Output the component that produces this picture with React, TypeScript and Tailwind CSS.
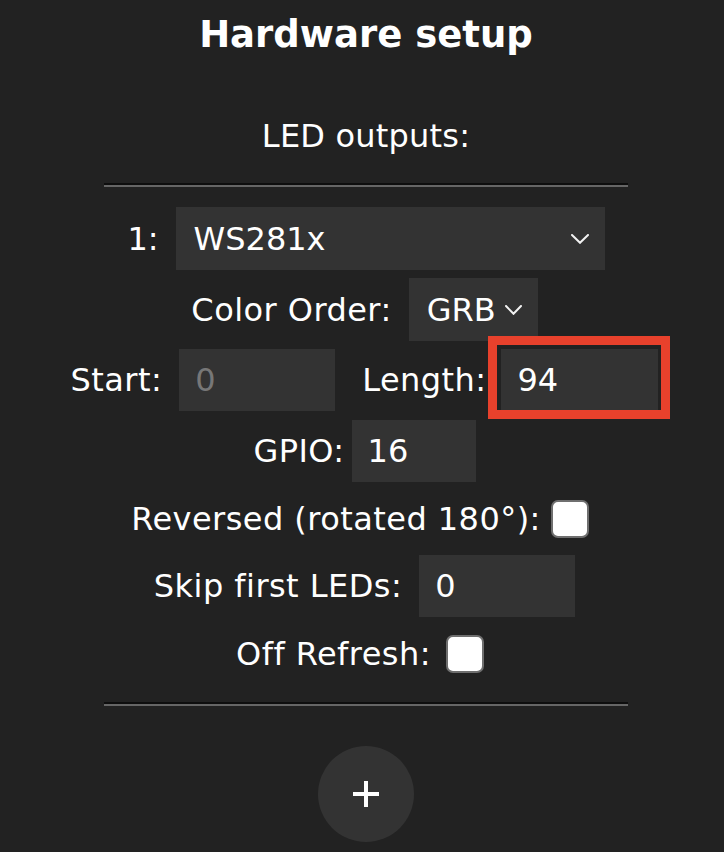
import React from "react";

const Chevron = ({ w, h }: { w: number; h: number }) => (
  <svg width={w} height={h} viewBox={`0 0 ${w} ${h}`} fill="none">
    <polyline
      points={`1,1 ${w / 2},${h - 1.2} ${w - 1},1`}
      stroke="#f2f2f2"
      strokeWidth="2"
      strokeLinecap="round"
      strokeLinejoin="miter"
    />
  </svg>
);

const Box = ({
  w,
  value,
  muted,
  className = "",
}: {
  w: string;
  value: string;
  muted?: boolean;
  className?: string;
}) => (
  <div
    className={`flex h-[62px] items-center bg-[#333333] pl-[16px] ${w} ${
      muted ? "text-[#777777]" : "text-white"
    } ${className}`}
  >
    {value}
  </div>
);

const Check = () => (
  <div className="mr-[12px] h-[38px] w-[38px] rounded-[7px] border-[2px] border-[#6f6f6f] bg-white" />
);

const Label = ({ children, className = "" }: { children: React.ReactNode; className?: string }) => (
  <span className={`tracking-[0.45px] ${className}`}>{children}</span>
);

export default function App() {
  return (
    <div
      className="min-h-screen bg-[#222222] pl-2 text-white"
      style={{ fontFamily: '"DejaVu Sans", Verdana, sans-serif' }}
    >
      <div className="flex flex-col items-center text-[32px] leading-none">
        <h2 className="flex h-[68px] items-center text-[37px] font-bold">Hardware setup</h2>

        <div className="mt-[44px] flex h-[48px] items-center tracking-[0.2px]">LED outputs:</div>

        <div className="mt-[23px] w-[524px] border-t-2 border-b-2 border-t-[#0e0e0e] border-b-[#666666]" />

        {/* Row 1 */}
        <div className="mt-[20px] flex h-[63px] items-center gap-[17px]">
          <span>1:</span>
          <div className="flex h-[63px] w-[429px] items-center justify-between bg-[#333333] pl-[18px] pr-[16px]">
            <span>WS281x</span>
            <Chevron w={18} h={10} />
          </div>
        </div>

        {/* Row 2 */}
        <div className="mt-[8px] flex h-[63px] items-center gap-[17px] pr-[3px]">
          <Label>Color Order:</Label>
          <div className="flex h-[63px] w-[129px] items-center justify-between bg-[#333333] pl-[18px] pr-[16px]">
            <span>GRB</span>
            <Chevron w={17} h={10} />
          </div>
        </div>

        {/* Row 3 */}
        <div className="mt-[8px] flex h-[62px] items-center pr-[3px]">
          <Label>Start:</Label>
          <Box w="w-[156px]" value="0" muted className="ml-[17px]" />
          <Label className="ml-[27px]">Length:</Label>
          <div className="relative ml-[15px]">
            <Box w="w-[157px]" value="94" />
            <div className="pointer-events-none absolute -top-[13px] -bottom-[8px] -left-[13px] -right-[12px] border-[9px] border-[#e8412c]" />
          </div>
        </div>

        {/* Row 4 */}
        <div className="mt-[9px] flex h-[62px] items-center gap-[7px] pr-[3px]">
          <Label>GPIO:</Label>
          <Box w="w-[124px]" value="16" />
        </div>

        {/* Row 5 */}
        <div className="mt-[9px] flex h-[55px] items-center gap-[10px]">
          <Label>Reversed (rotated 180°):</Label>
          <Check />
        </div>

        {/* Row 6 */}
        <div className="mt-[9px] flex h-[62px] items-center gap-[17px] pr-[3px]">
          <Label>Skip first LEDs:</Label>
          <Box w="w-[156px]" value="0" />
        </div>

        {/* Row 7 */}
        <div className="mt-[9px] flex h-[55px] items-center gap-[15px]">
          <Label>Off Refresh:</Label>
          <Check />
        </div>

        <div className="mt-[21px] w-[524px] border-t-2 border-b-2 border-t-[#0e0e0e] border-b-[#666666]" />

        <button className="mt-[40px] flex h-[96px] w-[96px] items-center justify-center rounded-full bg-[#333333]">
          <svg width="26" height="26" viewBox="0 0 26 26">
            <line x1="13" y1="0" x2="13" y2="26" stroke="#fff" strokeWidth="4" />
            <line x1="0" y1="13" x2="26" y2="13" stroke="#fff" strokeWidth="4" />
          </svg>
        </button>
      </div>
    </div>
  );
}
